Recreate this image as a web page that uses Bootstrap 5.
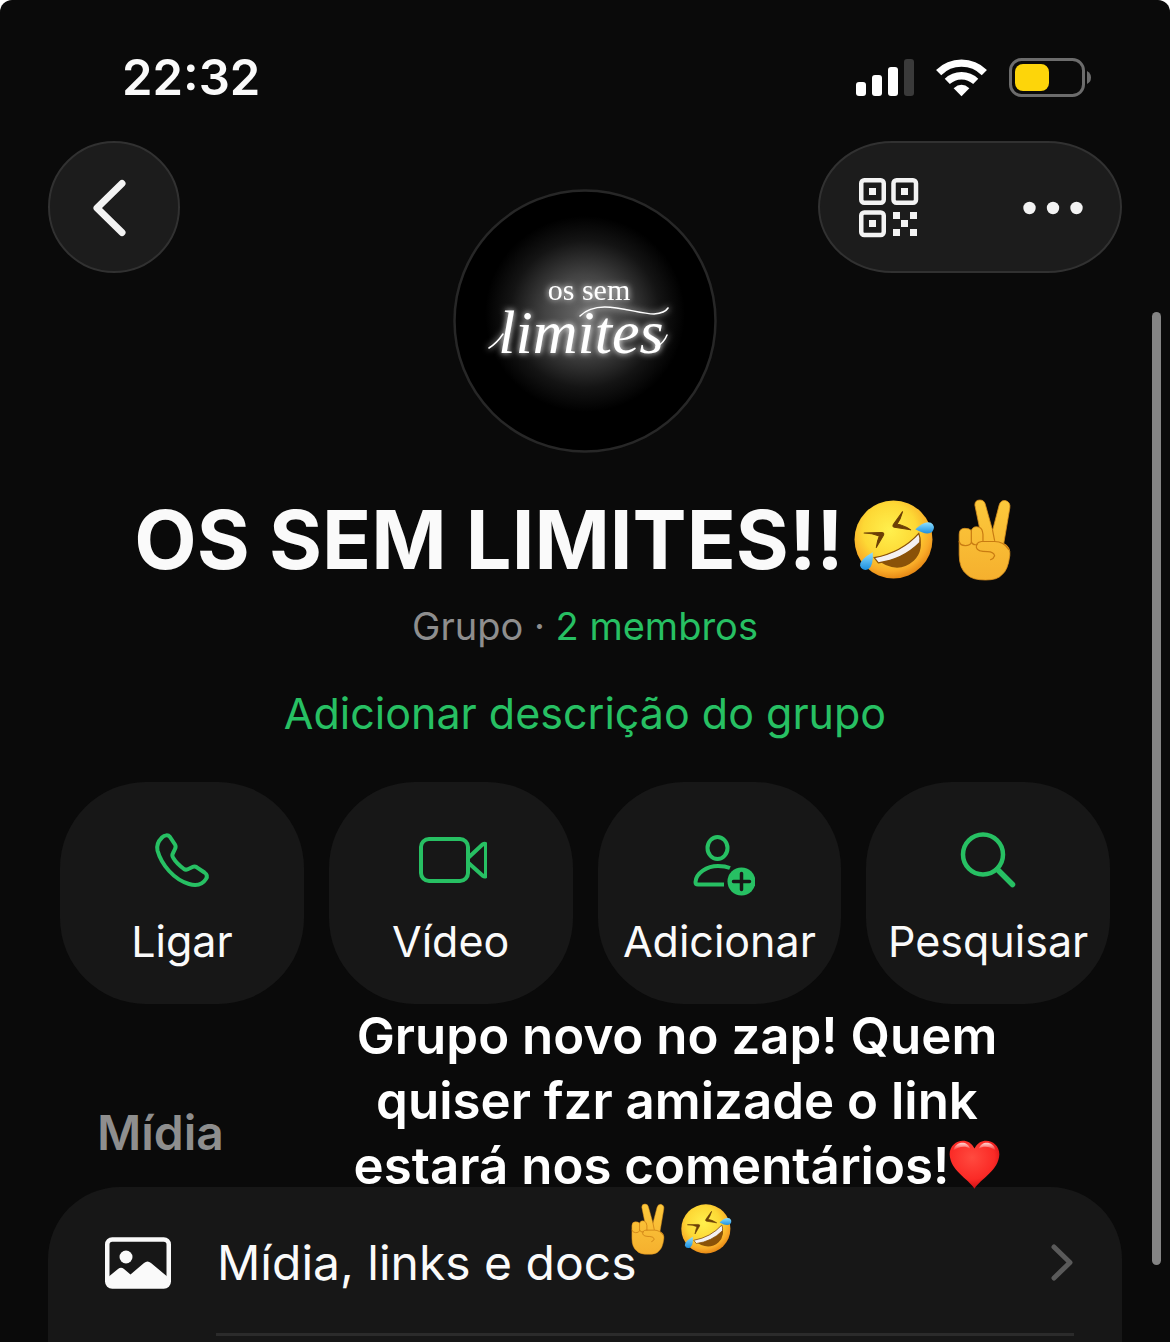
<!DOCTYPE html>
<html lang="pt-BR">
<head>
<meta charset="utf-8">
<meta name="viewport" content="width=device-width, initial-scale=1">
<title>OS SEM LIMITES!!</title>
<link href="https://cdn.jsdelivr.net/npm/bootstrap@5.3.0/dist/css/bootstrap.min.css" rel="stylesheet">
<style>
  html, body { background: #fff; }
  body { font-family: Inter, "Noto Sans", sans-serif; color: #fafafa; }
  svg { display: block; flex: none; }
  symbol { overflow: visible; }
  .screen { background: #0a0a0a; border-radius: 12px 12px 0 0; overflow: hidden; }
  .status { padding: 46px 79px 31px 122px; }
  .status-icons { gap: 22px; }
  .clock { font-size: 49px; line-height: 64px; font-weight: 600; }
  .topbar { display: grid; grid-template-columns: 1fr auto 1fr; padding: 0 48px; align-items: start; }
  .glass { background: #1c1c1c; border: 2px solid #313131; height: 132px; color: #f3f3f3; padding: 0; }
  .glass-round { width: 132px; border-radius: 50%; }
  .glass-pill { width: 304px; border-radius: 74px / 66px; padding: 2px 37px 0 39px; }
  .plain { background: none; border: 0; padding: 0; color: inherit; }
  .avatar { margin-top: 48px; }
  .group-name { font-size: 81px; line-height: 96px; font-weight: 700; margin: 39px 0 0; }
  .group-meta { font-size: 38px; line-height: 48px; margin: 14px 0 0; color: #8e8e8e; }
  .green, .green:hover { color: #27c063; text-decoration: none; }
  .describe { font-size: 43px; line-height: 56px; margin-top: 35px; }
  .tiles { display: grid; grid-template-columns: repeat(4, 1fr); gap: 25px; padding: 0 60px; margin-top: 41px; }
  .tile { background: #171717; border: 0; border-radius: 86px; color: #fafafa; padding: 42px 0 35px; gap: 17px; font-size: 43px; line-height: 56px; }
  .tile svg { color: #27c063; }
  .section-title { font-size: 48px; line-height: 60px; font-weight: 600; color: #8e8e8e; margin: 99px 97px 24px; }
  .panel { background: #171717; border-radius: 72px 72px 0 0; margin: 0 48px; padding-bottom: 6px; }
  .panel-row, .panel-row:hover { color: #fafafa; text-decoration: none; font-size: 48px; line-height: 60px; padding: 46px 48px 40px 56px; }
  .panel-row span { padding-left: 45px; }
  .panel-line { height: 3px; background: #2b2b2b; margin: 0 48px 0 168px; }
  .caption-text { position: absolute; top: 1003px; right: 153px; width: 680px; font-size: 51px; line-height: 65px; font-weight: 600; color: #fff; text-align: center; white-space: nowrap; pointer-events: none; margin: 0; }
  .emoji { display: inline-block; width: 1em; height: 1em; overflow: visible; }
  .group-name .emoji { vertical-align: -12px; margin-left: 10px; }
  .group-name .emoji:last-child { margin-right: 10px; }
  .caption-text .emoji { vertical-align: -6px; }
  .caption-text .emoji:last-child { margin-left: 7px; }
  .scroll-thumb { position: absolute; top: 312px; right: 9px; width: 9px; height: 953px; border-radius: 5px; background: #848484; }
</style>
<script src="https://cdn.jsdelivr.net/npm/bootstrap@5.3.0/dist/js/bootstrap.bundle.min.js"></script>
</head>
<body>
<svg width="0" height="0" class="position-absolute" aria-hidden="true">
  <defs>
    <radialGradient id="face" cx="45%" cy="38%" r="62%">
      <stop offset="0" stop-color="#fff04d"/><stop offset=".55" stop-color="#fdd835"/><stop offset=".85" stop-color="#f9ab28"/><stop offset="1" stop-color="#e78a16"/>
    </radialGradient>
    <linearGradient id="tear" x1="0" y1="0" x2="0" y2="1"><stop offset="0" stop-color="#8fe0ff"/><stop offset="1" stop-color="#1c8fe0"/></linearGradient>
    <linearGradient id="skin" x1="0" y1="0" x2="0" y2="1"><stop offset="0" stop-color="#fcc93c"/><stop offset="1" stop-color="#f5b02e"/></linearGradient>
    <radialGradient id="heart-red" cx="45%" cy="35%" r="65%"><stop offset="0" stop-color="#ff4a3f"/><stop offset=".7" stop-color="#fb2a26"/><stop offset="1" stop-color="#cf0f14"/></radialGradient>
    <linearGradient id="gloss" x1="0" y1="0" x2="0" y2="1"><stop offset="0" stop-color="#fff" stop-opacity=".8"/><stop offset="1" stop-color="#fff" stop-opacity="0"/></linearGradient>
    <symbol id="e-rofl" viewBox="0 0 80 80">
      <circle cx="39" cy="39" r="38.500" fill="url(#face)"/>
      <path d="M48 11.500 39 24 Q37.500 26.500 40 27 L56 29.500 Q48 24.500 42.500 24 Q46 19 48 11.500Z" fill="#6b3f06" stroke="#6b3f06" stroke-linejoin="round"/>
      <path d="M10 32.500 L27 32 Q30.500 32 29 35 L22 47 Q23 40 25 35.500 Q18 32.500 10 32.500Z" fill="#6b3f06" stroke="#6b3f06" stroke-linejoin="round"/>
      <path d="M20 57 Q47 52 64 33 Q70 49 59 60 Q42 75 20 57Z" fill="#8a5208"/>
      <path d="M20 57 Q47 52 64 33 Q66 38 65 42 Q48 59 24 62Z" fill="#f4f1f2" stroke="#8a5208" stroke-width="1.200"/>
      <path d="M60.500 29 Q70 20 76 22.500 Q81 26 77.500 31 Q73 36 60.500 29Z" fill="url(#tear)"/>
      <path d="M18.500 51.500 Q5 59 6 65 Q8 70.500 14 68.500 Q19.500 65 18.500 51.500Z" fill="url(#tear)"/>
    </symbol>
    <symbol id="e-peace" viewBox="0 0 80 80">
      <path d="M29.500 5 Q29.500 0 34.500 0 Q39 0 40 5 L47 30 L53.500 5 Q55 0 59.500 .5 Q65 2 64 8 L58 43 Q65 46 64 55 Q62 70 56 74 Q52 79 40 79 Q27 79 22 74 Q14 68 14 54 V34 Q14 28 19.500 28 Q24 28 26 30 Q28 25 34 27Z" fill="url(#skin)" stroke="#d98f1c" stroke-width=".8"/>
      <path d="M26 30 V42 Q25 45 20 45 Q15 45 14 41 M26 41 Q27 45 32 44 M34 27 Q37 28 37.500 34 V41 M47 30 L49 40 M63 49 Q58 41 49 41 H36 Q30 42 31 47 Q32 51 42 51 Q48 51 49 55 Q48 58 45 59" fill="none" stroke="#c97c12" stroke-width="1.200" stroke-linecap="round"/>
    </symbol>
    <symbol id="e-heart" viewBox="0 0 80 80">
      <path d="M40 78 C30 62 2 50 1 24 C1 2 30 -6 40 15 C50 -6 79 2 79 24 C78 50 50 62 40 78Z" fill="url(#heart-red)"/>
      <path d="M7 18 C10 3 29 2 33 15 C26 10 14 12 7 18Z M47 15 C51 2 70 3 73 18 C66 12 54 10 47 15Z" fill="url(#gloss)"/>
    </symbol>
  </defs>
</svg>

<div class="screen position-relative">
  <header>
    <div class="status d-flex justify-content-between align-items-center">
      <time class="clock">22:32</time>
      <div class="status-icons d-flex align-items-center">
        <svg width="58" height="38" viewBox="0 0 58 38" fill="#fff" aria-hidden="true">
          <rect y="23" width="10" height="14" rx="3"/><rect x="16" y="16" width="10" height="21" rx="3"/><rect x="32" y="8" width="10" height="29" rx="3"/><rect x="48" width="10" height="37" rx="3" fill="#3a3a3a"/>
        </svg>
        <svg width="51" height="38" viewBox="0 0 52 38" fill="none" stroke="#fff" stroke-width="7.500" aria-hidden="true">
          <path d="M2.700 13.500 A33 33 0 0 1 49.300 13.500"/><path d="M11.500 22.500 A21 21 0 0 1 40.500 22.500"/><path d="M18 29.500 Q26 22.500 34 29.500 L26 37.500Z" fill="#fff" stroke="none"/>
        </svg>
        <svg width="82" height="40" viewBox="0 0 82 40" aria-hidden="true">
          <rect x="1.500" y="1.500" width="73" height="36" rx="11" fill="none" stroke="#6c6c6c" stroke-width="3"/>
          <rect x="6" y="6" width="34" height="27" rx="8" fill="#fdd50a"/><path d="M78 13 Q82 15 82 19.500 Q82 24 78 26Z" fill="#6c6c6c"/>
        </svg>
      </div>
    </div>
    <div class="topbar">
      <button type="button" class="glass glass-round d-flex align-items-center justify-content-center" aria-label="Voltar">
        <svg width="44" height="64" viewBox="0 0 44 64" fill="none" stroke="currentColor" stroke-width="7" stroke-linecap="round" stroke-linejoin="round"><path d="M30 8.500 5 33 30 57.500"/></svg>
      </button>
      <svg class="avatar" width="264" height="264" viewBox="-1 0 264 264" role="img" aria-label="os sem limites">
        <defs>
          <radialGradient id="halo"><stop offset="0" stop-color="#6a6a6a"/><stop offset=".4" stop-color="#434343"/><stop offset=".75" stop-color="#141414"/><stop offset="1" stop-color="#000"/></radialGradient>
          <filter id="neon" x="-20%" y="-40%" width="140%" height="180%"><feGaussianBlur stdDeviation="3" result="b"/><feMerge><feMergeNode in="b"/><feMergeNode in="SourceGraphic"/></feMerge></filter>
        </defs>
        <circle cx="131" cy="132" r="130.500" fill="#000" stroke="#272727" stroke-width="2.500"/>
        <ellipse cx="131" cy="125" rx="100" ry="98" fill="url(#halo)"/>
        <g fill="#fff" filter="url(#neon)" text-anchor="middle">
          <text x="135" y="111" font-family="'Liberation Serif', serif" font-size="30">os sem</text>
          <text x="127" y="164" font-family="'Liberation Serif', serif" font-style="italic" font-size="62">limites</text>
          <path d="M126 127 C145 108 180 125 200 125 Q211 124 214 119 M35 159 Q43 154 49 145 M202 158 Q210 154 213 146" fill="none" stroke="#fff" stroke-width="1.500" stroke-linecap="round"/>
        </g>
      </svg>
      <div class="glass glass-pill d-flex align-items-center justify-content-between ms-auto">
        <button type="button" class="plain" aria-label="Código QR">
          <svg width="60" height="60" viewBox="0 0 60 60" fill="currentColor">
            <g fill="none" stroke="currentColor" stroke-width="4.500"><rect x="2.250" y="2.250" width="22.500" height="22.500" rx="3"/><rect x="34.500" y="2.250" width="22.500" height="22.500" rx="3"/><rect x="2.250" y="34.500" width="22.500" height="22.500" rx="3"/></g>
            <path d="M10 10h7v7h-7zM42 10h7v7h-7zM10 42h7v7h-7zM34 34h7v7h-7zM51 34h7v7h-7zM42 42h7v7h-7zM34 51h7v7h-7zM51 51h7v7h-7z"/>
          </svg>
        </button>
        <button type="button" class="plain" aria-label="Mais opções">
          <svg width="60" height="16" viewBox="0 0 60 16" fill="currentColor"><circle cx="6.500" cy="8" r="6.200"/><circle cx="30" cy="8" r="6.200"/><circle cx="53.500" cy="8" r="6.200"/></svg>
        </button>
      </div>
    </div>
  </header>

  <main>
    <div class="text-center">
      <h1 class="group-name">OS SEM LIMITES!!<svg class="emoji" role="img" aria-label="🤣"><use href="#e-rofl"/></svg><svg class="emoji" role="img" aria-label="✌️"><use href="#e-peace"/></svg></h1>
      <p class="group-meta">Grupo · <a href="#" class="green">2 membros</a></p>
      <div class="describe"><a href="#" class="green">Adicionar descrição do grupo</a></div>
    </div>

    <div class="tiles">
      <button type="button" class="tile d-flex flex-column align-items-center">
        <svg width="72" height="72" viewBox="0 0 72 72" fill="none" stroke="currentColor" stroke-width="4" stroke-linejoin="round"><path d="M16 13.500 C18.500 11 22 10.500 24 13 L29 20.500 C30 22 29.700 23.500 29 25 L26.800 29.500 C26 31 26.300 32.500 27.300 34 C30 38.500 34 42 38 45 C39.200 45.800 40.500 45.800 41.800 45.200 L46.500 43 C48 42.300 49.500 42.500 50.800 43.300 L58.500 48.500 C61 50.300 61.600 52.500 60 55 C56.500 60.500 50 62 43 60 C28 55.500 15.500 41 11.500 26.500 C10.300 21.500 12.500 17 16 13.500Z"/></svg>
        <span>Ligar</span>
      </button>
      <button type="button" class="tile d-flex flex-column align-items-center">
        <svg width="72" height="72" viewBox="0 0 72 72" fill="none" stroke="currentColor" stroke-width="4" stroke-linejoin="round"><rect x="6" y="15" width="47" height="42" rx="8"/><path d="M53 34 67.500 20.500 Q71 18.500 71 22 V50.500 Q71 54 67.500 51.500 L53 38.500"/></svg>
        <span>Vídeo</span>
      </button>
      <button type="button" class="tile d-flex flex-column align-items-center">
        <svg width="72" height="72" viewBox="0 0 72 72" fill="none" stroke="currentColor" stroke-width="4" stroke-linejoin="round"><ellipse cx="34.500" cy="24" rx="10" ry="11"/><path d="M47 44 C43 42.300 39 42 35 42 C24 42 13 49 12.500 58 Q12.500 60.500 15 60.500 H41"/><circle cx="58.500" cy="57.500" r="14" fill="currentColor" stroke="none"/><path d="M58.500 49.500v16M50.500 57.500h16" stroke="#171717" stroke-width="3.500" stroke-linecap="round"/></svg>
        <span>Adicionar</span>
      </button>
      <button type="button" class="tile d-flex flex-column align-items-center">
        <svg width="72" height="72" viewBox="0 0 72 72" fill="none" stroke="currentColor" stroke-linecap="round"><circle cx="31" cy="30.500" r="20" stroke-width="4.500"/><path d="M45.500 45.500 60.500 60.500" stroke-width="5.500"/></svg>
        <span>Pesquisar</span>
      </button>
    </div>

    <h2 class="section-title">Mídia</h2>
    <div class="panel">
      <a href="#" class="panel-row d-flex align-items-center">
        <svg width="68" height="52" viewBox="0 0 68 52" aria-hidden="true"><rect x="3.250" y="2.500" width="61.500" height="47" rx="5" fill="none" stroke="#fafafa" stroke-width="4.500"/><circle cx="22" cy="20" r="6.500" fill="#fafafa"/><path d="M3 41 14 32 Q17 29.500 20 32 L26.500 37.500 40 26 Q43.500 23 47 26 L65 41 V47 Q64 50 61 50 H7 Q3 50 3 46Z" fill="#fafafa"/></svg>
        <span class="flex-grow-1">Mídia, links e docs</span>
        <svg width="24" height="40" viewBox="0 0 24 40" fill="none" stroke="#5a5a5a" stroke-width="5" stroke-linecap="round" stroke-linejoin="round" aria-hidden="true"><path d="M4 4 20 19.500 4 35"/></svg>
      </a>
      <div class="panel-line"></div>
    </div>
  </main>

  <p class="caption-text">Grupo novo no zap! Quem<br>quiser fzr amizade o link<br>estará nos comentários!<svg class="emoji" role="img" aria-label="❤️"><use href="#e-heart"/></svg><br><svg class="emoji" role="img" aria-label="✌️"><use href="#e-peace"/></svg><svg class="emoji" role="img" aria-label="🤣"><use href="#e-rofl"/></svg></p>
  <div class="scroll-thumb" aria-hidden="true"></div>
</div>
</body>
</html>
